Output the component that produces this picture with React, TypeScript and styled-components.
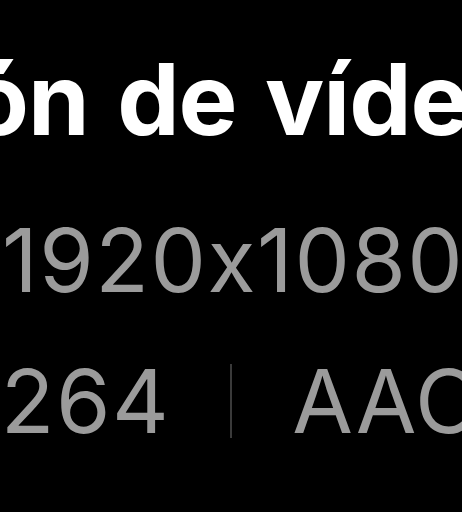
import styled, { createGlobalStyle } from 'styled-components'

const GlobalStyle = createGlobalStyle`
  html, body {
    margin: 0;
    padding: 0;
    background: #000;
  }
  body {
    font-family: Inter, "Noto Sans", "Liberation Sans", sans-serif;
    font-feature-settings: "calt" 0;
    -webkit-font-smoothing: antialiased;
  }
`

const Sheet = styled.main`
  width: 462px;
  height: 512px;
  overflow: hidden;
  background: #000;
  display: flex;
  flex-direction: column;
  align-items: flex-start;
  padding-top: 50px;
  box-sizing: border-box;
`

const Title = styled.h1`
  margin: 0 0 0 -484px;
  font-size: 99px;
  line-height: 1;
  font-weight: 700;
  color: #fff;
  white-space: nowrap;
  letter-spacing: -1px;
  word-spacing: 6px;
`

const Info = styled.div<{ $gap: number; $shift: number }>`
  margin-top: ${({ $gap }) => $gap}px;
  margin-left: ${({ $shift }) => $shift}px;
  display: flex;
  align-items: center;
  gap: 60px;
  font-size: 88px;
  line-height: 1;
  font-weight: 400;
  letter-spacing: 1.5px;
  color: #9b9b9b;
  white-space: nowrap;
`

const Divider = styled.span`
  width: 2px;
  height: 74px;
  background: #3a3a3a;
`

export default function App() {
  return (
    <>
      <GlobalStyle />
      <Sheet>
        <Title>Información de vídeo</Title>
        <Info $gap={67} $shift={2}>1920x1080</Info>
        <Info $gap={53} $shift={-93}>
          <span>H.264</span>
          <Divider />
          <span>AAC</span>
        </Info>
      </Sheet>
    </>
  )
}
